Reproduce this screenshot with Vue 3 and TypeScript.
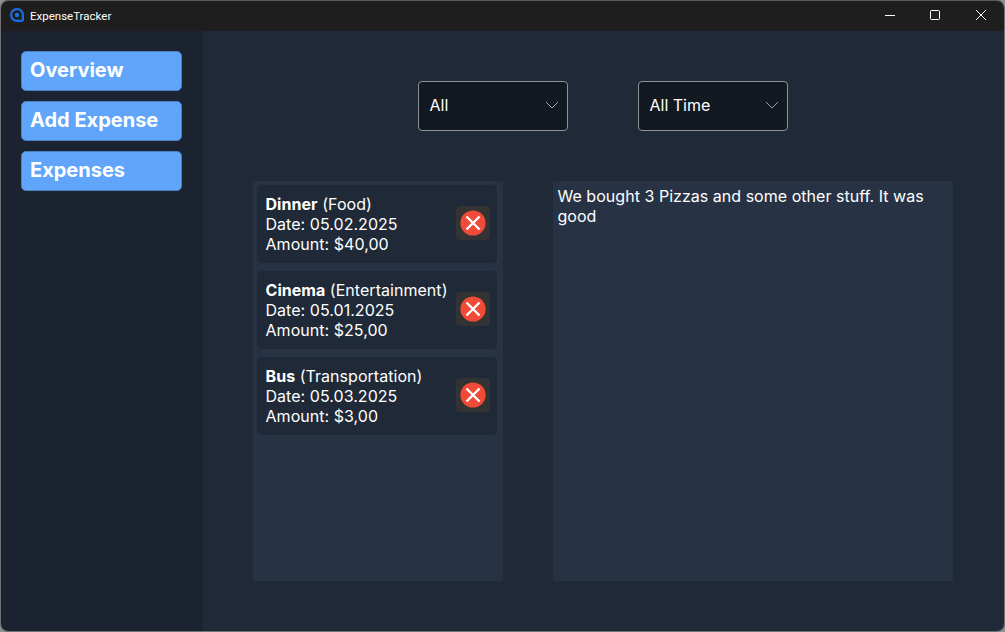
<script setup lang="ts">
import { ref } from 'vue'

interface Expense {
  name: string
  category: string
  date: string
  amount: string
}

const navItems = ['Overview', 'Add Expense', 'Expenses']

const expenses = ref<Expense[]>([
  { name: 'Dinner', category: 'Food', date: '05.02.2025', amount: '$40,00' },
  { name: 'Cinema', category: 'Entertainment', date: '05.01.2025', amount: '$25,00' },
  { name: 'Bus', category: 'Transportation', date: '05.03.2025', amount: '$3,00' },
])

const filters = ['All', 'All Time']
</script>

<template>
  <div class="window">
    <header class="titlebar">
      <svg class="app-icon" width="14" height="14" viewBox="0 0 14 14" fill="none">
        <path d="M7 1.1a5.9 5.9 0 1 0 0 11.8h4.4a1.5 1.5 0 0 0 1.5-1.5V7A5.9 5.9 0 0 0 7 1.1z" stroke="#1a6fe8" stroke-width="2.2" />
        <circle cx="7" cy="7" r="2.2" fill="#1a6fe8" />
      </svg>
      <span class="app-title">ExpenseTracker</span>
      <div class="win-controls">
        <span class="win-btn">
          <svg width="12" height="12" viewBox="0 0 12 12"><path d="M2 6.5h10" stroke="#fff" stroke-width="1" /></svg>
        </span>
        <span class="win-btn">
          <svg width="12" height="12" viewBox="0 0 12 12" fill="none"><rect x="1.5" y="1.5" width="9" height="9" rx="1" stroke="#fff" /></svg>
        </span>
        <span class="win-btn">
          <svg width="12" height="12" viewBox="0 0 12 12"><path d="M1 1l10 10M11 1L1 11" stroke="#fff" stroke-width="1" /></svg>
        </span>
      </div>
    </header>

    <div class="body">
      <nav class="sidebar">
        <button v-for="item in navItems" :key="item" class="nav-btn">{{ item }}</button>
      </nav>

      <main class="content">
        <div class="filters">
          <div v-for="f in filters" :key="f" class="select">
            <span>{{ f }}</span>
            <svg width="14" height="8" viewBox="0 0 14 8" fill="none">
              <path d="M1 1l6 6 6-6" stroke="#9ca3af" stroke-width="1" />
            </svg>
          </div>
        </div>

        <div class="panels">
          <section class="list">
            <article v-for="e in expenses" :key="e.name" class="card">
              <div class="card-text">
                <div><strong>{{ e.name }}</strong> ({{ e.category }})</div>
                <div>Date: {{ e.date }}</div>
                <div>Amount: {{ e.amount }}</div>
              </div>
              <button class="delete" aria-label="Delete">
                <svg width="26" height="26" viewBox="0 0 26 26">
                  <circle cx="13" cy="13" r="12.6" fill="#f04a38" />
                  <path d="M6.5 6.5l13 13M19.5 6.5l-13 13" stroke="#fff" stroke-width="2.4" />
                </svg>
              </button>
            </article>
          </section>

          <section class="detail">We bought 3 Pizzas and some other stuff. It was good</section>
        </div>
      </main>
    </div>
  </div>
</template>

<style>
html, body {
  margin: 0;
  background: #8f9194;
}
</style>

<style scoped>
.window {
  width: 1005px;
  height: 632px;
  box-sizing: border-box;
  display: flex;
  flex-direction: column;
  border: 1px solid #6f7175;
  border-top-color: #5a5a5a;
  border-radius: 8px;
  overflow: hidden;
  font-family: Inter, "Liberation Sans", sans-serif;
  color: #fff;
}

.titlebar {
  height: 30px;
  flex: none;
  display: flex;
  align-items: center;
  background: #1e1e1e;
  padding-left: 9px;
}

.app-icon {
  margin-right: 6px;
  margin-bottom: 2px;
}

.app-title {
  font-family: Roboto, "Open Sans", sans-serif;
  font-size: 11.5px;
}

.win-controls {
  margin-left: auto;
  display: flex;
  margin-bottom: 2px;
}

.win-btn {
  width: 46px;
  height: 28px;
  display: flex;
  align-items: center;
  justify-content: center;
}

.body {
  flex: 1;
  display: flex;
  min-height: 0;
}

.sidebar {
  width: 202px;
  flex: none;
  box-sizing: border-box;
  background: #1b2331;
  padding: 20px 21px 0 20px;
  display: flex;
  flex-direction: column;
  gap: 10px;
}

.nav-btn {
  height: 40px;
  box-sizing: border-box;
  background: #60a5fa;
  border: 1px solid #4a80c4;
  border-radius: 5px;
  padding: 0 0 2px 8px;
  text-align: left;
  color: #fff;
  font-family: inherit;
  font-size: 20px;
  font-weight: 700;
}

.content {
  flex: 1;
  background: #1f2937;
  padding: 50px 50px 50px 48px;
  display: flex;
  flex-direction: column;
  align-items: center;
  gap: 50px;
}

.filters {
  display: flex;
  gap: 70px;
}

.select {
  width: 150px;
  height: 50px;
  box-sizing: border-box;
  background: #121921;
  border: 1px solid #8e9297;
  border-radius: 4px;
  padding: 0 8px 2px 11px;
  display: flex;
  align-items: center;
  justify-content: space-between;
  font-size: 16px;
}

.panels {
  display: flex;
  gap: 50px;
}

.list {
  width: 250px;
  height: 400px;
  box-sizing: border-box;
  background: #273345;
  padding: 4px 6px 4px 4px;
  display: flex;
  flex-direction: column;
  gap: 8px;
}

.card {
  height: 78px;
  box-sizing: border-box;
  background: #1f2937;
  border-radius: 5px;
  padding: 0 7px 0 9px;
  display: flex;
  align-items: center;
  justify-content: space-between;
  font-size: 16px;
  line-height: 20px;
  letter-spacing: 0.04px;
}

.card-text strong {
  font-weight: 700;
}

.delete {
  width: 34px;
  height: 34px;
  padding: 0;
  margin-bottom: 2px;
  border: none;
  border-radius: 4px;
  background: #333333;
  display: flex;
  align-items: center;
  justify-content: center;
}

.detail {
  width: 400px;
  height: 400px;
  box-sizing: border-box;
  background: #273345;
  padding: 5px;
  font-size: 16px;
  line-height: 20px;
  letter-spacing: 0.03px;
}
</style>
